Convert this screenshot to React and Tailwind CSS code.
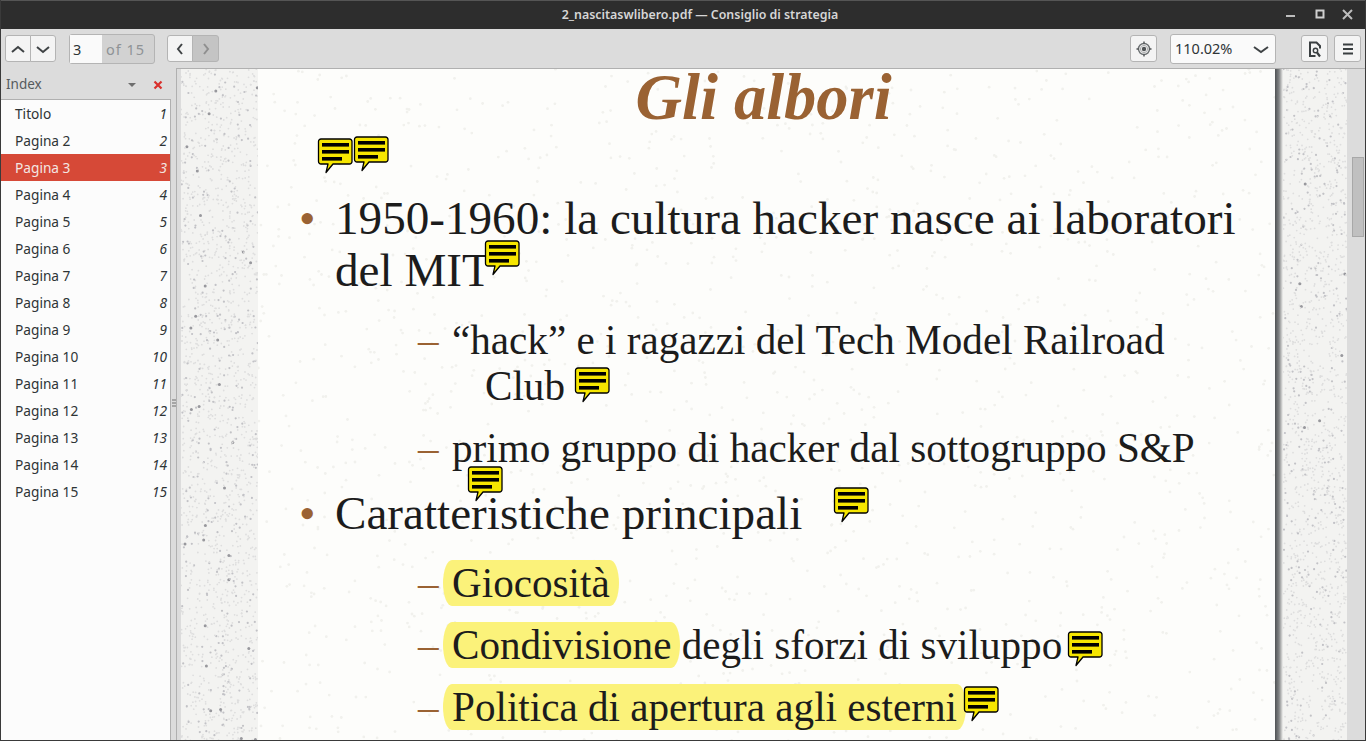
import React from "react";

function rng(seed) {
  let s = seed;
  return () => {
    s = (s * 1664525 + 1013904223) % 4294967296;
    return s / 4294967296;
  };
}

function Speckle({ width, height, seed, count, soft }) {
  const r = rng(seed);
  const dots = [];
  for (let i = 0; i < count; i++) {
    const big = r();
    dots.push(
      <circle
        key={i}
        cx={(r() * width).toFixed(1)}
        cy={(r() * height).toFixed(1)}
        r={soft ? 1.4 : big > 0.99 ? 1.5 : big > 0.85 ? 1.1 : 0.9}
        fill={soft ? "#f1f1ed" : big > 0.99 ? "#98989d" : big > 0.85 ? "#c2c2c6" : "#dedede"}
      />
    );
  }
  return (
    <svg width={width} height={height} className="block">
      <defs>
        <filter id={`soften-${seed}`}>
          <feGaussianBlur stdDeviation="0.5" />
        </filter>
      </defs>
      <g filter={`url(#soften-${seed})`}>{dots}</g>
    </svg>
  );
}

function Note({ x, y }) {
  return (
    <svg width="37" height="37" viewBox="0 0 37 37" className="absolute" style={{ left: x, top: y }}>
      <path
        d="M4 1H32.5A2.5 2.5 0 0 1 35 3.5V23.5A2.5 2.5 0 0 1 32.5 26H16L9 34.5L11 26H4A2.5 2.5 0 0 1 1.500 23.5V3.500A2.500 2.500 0 0 1 4 1Z"
        fill="#f6e600"
        stroke="#000"
        strokeWidth="1.300"
        strokeLinejoin="round"
      />
      <rect x="5" y="5" width="27" height="3.600" fill="#000" />
      <rect x="5" y="12" width="27" height="3.600" fill="#000" />
      <rect x="5" y="19" width="20" height="3.600" fill="#000" />
    </svg>
  );
}

const btn = "flex items-center justify-center bg-[#f4f4f4] border border-[#b4b4b4] h-[27px] text-[#3a3f41]";

function Chevron({ d, color = "#3f4345", w = 16, h = 16, sw = 2 }) {
  return (
    <svg width={w} height={h} viewBox="0 0 16 16" fill="none">
      <path d={d} stroke={color} strokeWidth={sw} />
    </svg>
  );
}

const pages = ["Titolo", ...Array.from({ length: 14 }, (_, i) => `Pagina ${i + 2}`)];

function Item({ mark, children, className = "" }) {
  return (
    <div className={`flex ${className}`}>
      {mark}
      {children}
    </div>
  );
}

const Bullet = <span className="w-[36px] shrink-0 text-[#9a6233]">•</span>;
const Dash = <span className="w-[34px] shrink-0 text-[#9a6233]">–</span>;

function Mark({ children }) {
  return <span className="inline-block -mx-[9px] px-[9px] h-[46px] rounded-[9px/23px] bg-[#fbf27a]">{children}</span>;
}

export default function App() {
  return (
    <div className="w-[1366px] h-[741px] overflow-hidden flex flex-col border-x border-b border-[#3a3a3a] [font-family:'Noto_Sans',sans-serif] text-[#2e3436]">
      <header className="relative h-[29px] shrink-0 bg-[#2d2d2d] border-t border-[#555] flex items-center justify-center pl-[34px] text-[12.400px] font-semibold text-[#d6d6d6]">
        2_nascitaswlibero.pdf — Consiglio di strategia
        <div className="absolute right-[9px] top-[6px] flex items-center gap-[12.500px]">
          <svg width="16" height="16" viewBox="0 0 16 16"><rect x="3" y="8" width="9" height="2" fill="#bdbdbd" /></svg>
          <svg width="16" height="16" viewBox="0 0 16 16"><rect x="4.500" y="3.500" width="7" height="7" fill="none" stroke="#d0d0d0" strokeWidth="2" /></svg>
          <svg width="16" height="16" viewBox="0 0 16 16"><path d="M3 3L12 12M12 3L3 12" stroke="#bdbdbd" strokeWidth="2" /></svg>
        </div>
      </header>

      <div className="h-[39px] shrink-0 bg-[#dcdcdc] flex items-center pl-[4px] pr-[4px]">
        <div className="flex">
          <div className={`${btn} w-[26px] rounded-l-[3px]`}><Chevron d="M2 11L8 6L14 11" /></div>
          <div className={`${btn} w-[26px] -ml-px rounded-r-[3px]`}><Chevron d="M2 6L8 11L14 6" /></div>
        </div>
        <div className="ml-[13px] w-[86px] h-[30px] flex border border-[#b4b4b4] rounded-[3px] bg-[#d2d2d2] text-[14.500px]">
          <span className="w-[32px] bg-[#fafafa] pl-[3px] leading-[28px] text-[#2e3436]">3</span>
          <span className="pl-[4px] leading-[28px] text-[#8f9396] tracking-[1px]">of 15</span>
        </div>
        <div className="flex ml-[12px]">
          <div className={`${btn} w-[26px] rounded-l-[3px]`}><Chevron d="M10 3L6 8L10 13" /></div>
          <div className={`${btn} w-[27px] -ml-px rounded-r-[3px] !bg-[#c4c4c4]`}><Chevron d="M6 3L10 8L6 13" color="#8f8f8f" /></div>
        </div>
        <div className="flex-1" />
        <div className={`${btn} w-[27px] rounded-[3px]`}>
          <svg width="18" height="18" viewBox="0 0 18 18" fill="none">
            <circle cx="9" cy="9" r="5.500" stroke="#6b6f71" strokeWidth="1.400" />
            <circle cx="9" cy="9" r="3.600" stroke="#a9abac" strokeWidth="1" />
            <circle cx="9" cy="9" r="2.200" fill="#505456" />
            <path d="M9 1.500V3.800M9 14.200V16.500M1.500 9H3.800M14.200 9H16.500" stroke="#505456" strokeWidth="1.400" />
          </svg>
        </div>
        <div className="ml-[13px] w-[106px] h-[30px] flex items-center justify-between pl-[4px] pr-[6px] bg-[#fafafa] border border-[#b4b4b4] rounded-[3px] text-[14.500px]">
          <span>110.02%</span>
          <Chevron d="M1 6L8 11L15 6" />
        </div>
        <div className={`${btn} ml-[25px] w-[27px] rounded-[3px]`}>
          <svg width="16" height="18" viewBox="0 0 16 18" fill="none">
            <path d="M8.500 16H3V2.500H9.500L13 6V8.500" stroke="#3a3f41" strokeWidth="2" />
            <circle cx="8.500" cy="10.500" r="2.200" stroke="#3a3f41" strokeWidth="1.400" />
            <path d="M10 12.500L13 16.500" stroke="#3a3f41" strokeWidth="2.200" />
          </svg>
        </div>
        <div className={`${btn} ml-[6px] w-[27px] rounded-[3px]`}>
          <svg width="14" height="14" viewBox="0 0 14 14"><path d="M2 2.500H12M2 7H12M2 11.500H12" stroke="#3a3f41" strokeWidth="2" /></svg>
        </div>
      </div>

      <div className="flex flex-1 min-h-0">
        <aside className="w-[170px] shrink-0 flex flex-col bg-[#dcdcdc]">
          <div className="h-[31px] shrink-0 flex items-center pt-[2px] pl-[5px] pr-[8px] text-[13.500px] text-[#555a5c]">
            <span className="flex-1">Index</span>
            <svg width="8" height="6" viewBox="0 0 8 6" className="mr-[17px]"><path d="M0 1H8L4 5Z" fill="#6e6e6e" /></svg>
            <svg width="10" height="10" viewBox="0 0 10 10"><path d="M1.500 1.500L8.500 8.500M8.500 1.500L1.500 8.500" stroke="#d9302c" strokeWidth="2.200" /></svg>
          </div>
          <ul className="flex-1 bg-[#fcfcfc] border-t border-r border-[#b0b0b0] text-[13.700px]">
            {pages.map((p, i) => (
              <li
                key={p}
                className={`h-[27px] pt-[2px] flex items-center justify-between pl-[14px] pr-[3px] ${
                  i === 2 ? "bg-[#d64937] text-[#f3e6e2]" : ""
                }`}
              >
                <span>{p}</span>
                <span className="italic">{i + 1}</span>
              </li>
            ))}
          </ul>
        </aside>

        <div className="relative w-[6px] shrink-0 bg-[#dcdcdc] border-r border-[#b0b0b0] flex flex-col items-center justify-center gap-[1px] pb-[2px]">
          <span className="w-[4px] h-[2px] bg-[#a5a5a5]" />
          <span className="w-[4px] h-[2px] bg-[#a5a5a5]" />
          <span className="w-[4px] h-[2px] bg-[#a5a5a5]" />
        </div>

        <main className="relative flex-1 min-w-0 flex border-t border-[#b0b0b0] bg-[#dcdcdc] overflow-hidden [font-family:'Liberation_Serif',serif] text-[#1c1c1c]">
          <div className="w-[4px] shrink-0" />
          <div className="w-[77px] shrink-0 bg-[#f3f3f1]">
            <Speckle width={77} height={672} seed={11} count={1900} />
          </div>
          <div className="relative w-[1017px] shrink-0 bg-[#fdfdfb] overflow-hidden">
            <div className="absolute inset-0">
              <Speckle width={1017} height={672} seed={5} count={1500} soft />
            </div>
            <div className="relative flex flex-col">
              <h1 className="text-center pr-[6px] text-[64.500px] leading-[58px] font-bold italic text-[#9a6233]">Gli albori</h1>
              <div className="pl-[41px] text-[47.150px] leading-[52px] mt-[65px]">
                <Item mark={Bullet}><span className="w-[910px]">1950-1960: la cultura hacker nasce ai laboratori del MIT</span></Item>
              </div>
              <div className="pl-[160px] text-[41.150px] leading-[46px] mt-[21px]">
                <Item mark={Dash}><span className="w-[740px] pl-[33px] -indent-[33px]">“hack” e i ragazzi del Tech Model Railroad Club</span></Item>
                <Item mark={Dash} className="mt-[16px]"><span>primo gruppo di hacker dal sottogruppo S&amp;P</span></Item>
              </div>
              <div className="pl-[41px] text-[47.150px] leading-[52px] mt-[16px]">
                <Item mark={Bullet}><span>Caratteristiche principali</span></Item>
              </div>
              <div className="pl-[160px] text-[41.150px] leading-[46px] mt-[21px]">
                <Item mark={Dash}><Mark>Giocosità</Mark></Item>
                <Item mark={Dash} className="mt-[16px]"><span><Mark>Condivisione</Mark> degli sforzi di sviluppo</span></Item>
                <Item mark={Dash} className="mt-[16px]"><Mark>Politica di apertura agli esterni</Mark></Item>
              </div>
            </div>
          </div>
          <div className="w-[8px] shrink-0 bg-gradient-to-r from-[#4f5254] via-[#828485] to-[#f3f3f1]" />
          <div className="w-[64px] shrink-0 bg-[#f3f3f1]">
            <Speckle width={64} height={672} seed={29} count={1600} />
          </div>
          <div className="relative flex-1">
            <div className="absolute left-[5px] top-[88px] w-[12px] h-[80px] bg-[#c0c0c0] border border-[#a8a8a8]" />
          </div>
          {[
            [140, 69],
            [176, 67],
            [307, 171],
            [397, 298],
            [290, 397],
            [656, 418],
            [890, 562],
            [786, 617],
          ].map(([x, y]) => (
            <Note key={`${x}-${y}`} x={x} y={y} />
          ))}
        </main>
      </div>
    </div>
  );
}
